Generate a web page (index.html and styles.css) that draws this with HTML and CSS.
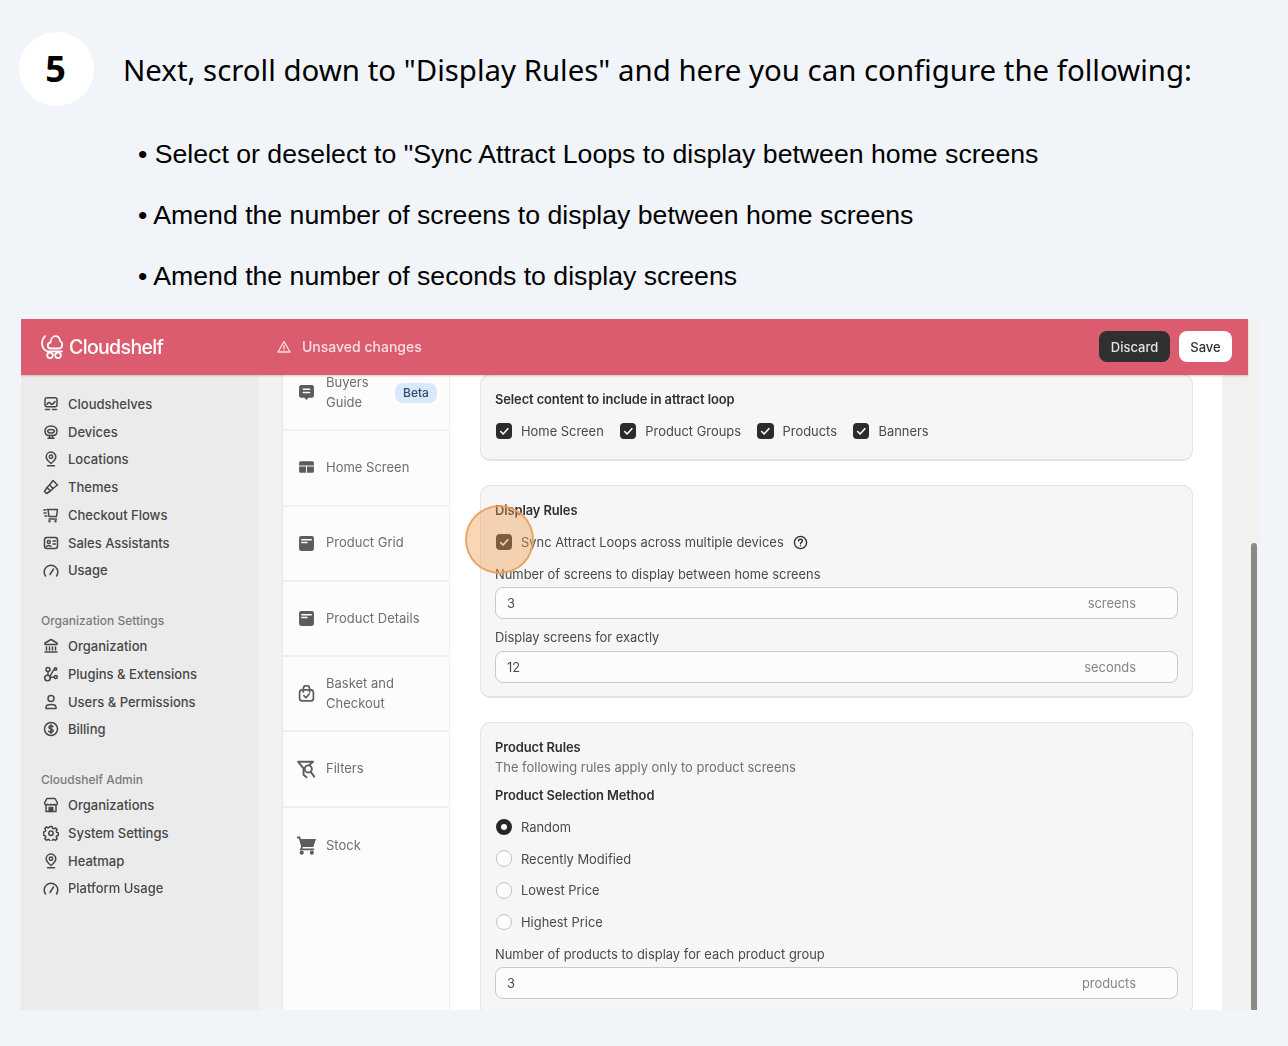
FILE: index.html
```html
<!DOCTYPE html>
<html lang="en">
<head>
    <meta charset="UTF-8">
    <title>Step 5 - Display Rules</title>
    <link rel="stylesheet" href="styles.css">
</head>
<body>
    <svg class="sprites" width="0" height="0">
        <symbol id="i-shelf" viewBox="0 0 16 16"><rect x="2" y="1.700" width="12" height="9" rx="2"/><path d="M4 8.500c1-2.500 2.500-2.500 3.500-1s2.500 1 4.500-2"/><path d="M2.500 13.500h4M9.500 13.500h4"/></symbol>
        <symbol id="i-device" viewBox="0 0 16 16"><path d="M2 7c0-3 2.500-5 6-5s6 2 6 5-2 4.500-4 4.500H6C4 11.500 2 10 2 7z"/><path d="M4.500 7c.5-2 6.500-2 7 0-.5 1.500-1.500 2-2.500 2H7C6 9 5 8.500 4.500 7zM5 14.300h6M6.500 11.500v2.800M9.500 11.500v2.800"/></symbol>
        <symbol id="i-pin" viewBox="0 0 16 16"><path d="M8 12.500C5.500 10.500 3.200 8.500 3.200 5.800a4.800 4.800 0 0 1 9.600 0c0 2.700-2.300 4.700-4.800 6.700z"/><circle cx="8" cy="5.800" r="1.700"/><path d="M4.500 14.800h7"/></symbol>
        <symbol id="i-brush" viewBox="0 0 16 16"><path d="M10 1.500l4.500 4.500-4.500 3.500L6.500 6z"/><path d="M6.500 6L4 8.500l3.500 3.500 2.500-2.500M4 8.500l-2.500 4 2 2 4-2.500"/></symbol>
        <symbol id="i-cart-fast" viewBox="0 0 16 16"><path d="M4 2.500h10.500l-1 7H6L5 2.500M6 12h7.500"/><path d="M.8 3h1.700M1 6h2M2 9h2"/><circle cx="6.500" cy="14.300" r=".5"/><circle cx="12.500" cy="14.300" r=".5"/></symbol>
        <symbol id="i-badge" viewBox="0 0 16 16"><rect x="1.500" y="2.500" width="13" height="11" rx="2.500"/><circle cx="5.800" cy="7" r="1.500"/><path d="M3.500 11.500c.5-1.500 4-1.500 4.500 0M10 6h2.500M10 9h2.500"/></symbol>
        <symbol id="i-gauge" viewBox="0 0 16 16"><path d="M2.500 14a6.800 6.800 0 1 1 11 0"/><path d="M7 12.500L10.500 7"/></symbol>
        <symbol id="i-bank" viewBox="0 0 16 16"><path d="M8 1.500l6 3.500v1.500H2V5zM3.500 9v3M6.500 9v3M9.500 9v3M12.500 9v3M2 14h12"/></symbol>
        <symbol id="i-apps" viewBox="0 0 16 16"><circle cx="5" cy="3.500" r="2"/><circle cx="12.500" cy="3" r="1.200"/><circle cx="4.500" cy="12" r="2.800"/><circle cx="12.800" cy="11" r="1.500"/><path d="M5 5.500v3.700M7.500 9.500l3-5.500M7 11.500l4.300-.5"/></symbol>
        <symbol id="i-user" viewBox="0 0 16 16"><circle cx="8" cy="4.500" r="3"/><path d="M3 14.500v-1.300c0-1.800 2-2.700 5-2.700s5 .9 5 2.700v1.300z"/></symbol>
        <symbol id="i-dollar" viewBox="0 0 16 16"><circle cx="8" cy="8" r="6.500"/><path d="M10 5.700C9.500 5 8.800 4.800 8 4.800c-1.200 0-2 .6-2 1.600 0 2.200 4.200 1 4.200 3.200 0 1-.9 1.600-2.200 1.600-.9 0-1.700-.3-2.200-1M8 3.800v8.400"/></symbol>
        <symbol id="i-store" viewBox="0 0 16 16"><path d="M4 1.500h8l2.500 4.500c0 1.800-2 2.300-3 1.200-.8 1-2.700 1-3.500 0-.8 1-2.700 1-3.500 0-1 1.100-3 .6-3-1.200zM3 8.500v6h10v-6"/><path d="M6.200 14.500v-4h3.600v4" fill="currentColor"/></symbol>
        <symbol id="i-gear" viewBox="0 0 16 16"><path d="M6.800 1.500h2.400l.4 1.800 1.300.6 1.600-1 1.700 1.700-1 1.600.6 1.300 1.700.4v2.400l-1.700.4-.6 1.300 1 1.600-1.700 1.700-1.600-1-1.300.6-.4 1.700H6.800l-.4-1.700-1.300-.6-1.600 1-1.700-1.700 1-1.600-.6-1.300-1.700-.4V6.900l1.700-.4.600-1.300-1-1.600 1.700-1.700 1.600 1 1.300-.6z"/><circle cx="8" cy="8.200" r="2.200"/></symbol>
        <symbol id="i-check" viewBox="0 0 16 16"><path d="M4.500 8.300l2.400 2.400 4.600-5.200"/></symbol>
    </svg>

    <div class="step">
        <div class="step-num">5</div>
        <div class="step-title">Next, scroll down to "Display Rules" and here you can configure the following:</div>
    </div>
    <div class="bullets">
        <p>• Select or deselect to "Sync Attract Loops to display between home screens</p>
        <p>• Amend the number of screens to display between home screens</p>
        <p>• Amend the number of seconds to display screens</p>
    </div>

    <div class="frame">
        <div class="app">
            <header class="topbar">
                <div class="logo">
                    <svg class="logo-mark" viewBox="0 0 22 24" fill="none" stroke="#fff" stroke-width="1.800" stroke-linecap="round" stroke-linejoin="round">
                        <path d="M4 1.200C1.800 3.500.8 6 1 8.800c.3 3.500 2.500 6.700 5.500 7.500H21"/>
                        <path d="M9.800 13.500c-1.800 0-3-1.300-3-3 0-1.600 1.200-2.800 2.700-3C9.800 3.800 12 1.200 14.500 1.200c2.600 0 4.300 2.200 4.500 4.800 1.300.4 2.200 1.700 2.200 3.400 0 2.300-1.500 4.100-3.700 4.100z"/>
                        <circle cx="9" cy="20.300" r="2.800"/>
                        <circle cx="17" cy="20.300" r="2.800"/>
                    </svg>
                    <span>Cloudshelf</span>
                </div>
                <div class="unsaved">
                    <svg class="warn" viewBox="0 0 16 16" fill="none" stroke="currentColor" stroke-width="1.300" stroke-linejoin="round" stroke-linecap="round"><path d="M8 2.500l6 10.500H2zM8 6.500v3M8 11.200v.1"/></svg>
                    <span>Unsaved changes</span>
                </div>
                <button class="btn btn-dark">Discard</button>
                <button class="btn btn-light">Save</button>
            </header>

            <div class="app-body">
                <nav class="sidebar">
                    <a class="nav-item"><svg class="icon"><use href="#i-shelf"/></svg>Cloudshelves</a>
                    <a class="nav-item"><svg class="icon"><use href="#i-device"/></svg>Devices</a>
                    <a class="nav-item"><svg class="icon"><use href="#i-pin"/></svg>Locations</a>
                    <a class="nav-item"><svg class="icon"><use href="#i-brush"/></svg>Themes</a>
                    <a class="nav-item"><svg class="icon"><use href="#i-cart-fast"/></svg>Checkout Flows</a>
                    <a class="nav-item"><svg class="icon"><use href="#i-badge"/></svg>Sales Assistants</a>
                    <a class="nav-item"><svg class="icon"><use href="#i-gauge"/></svg>Usage</a>

                    <div class="nav-label">Organization Settings</div>
                    <a class="nav-item"><svg class="icon"><use href="#i-bank"/></svg>Organization</a>
                    <a class="nav-item"><svg class="icon"><use href="#i-apps"/></svg>Plugins &amp; Extensions</a>
                    <a class="nav-item"><svg class="icon"><use href="#i-user"/></svg>Users &amp; Permissions</a>
                    <a class="nav-item"><svg class="icon"><use href="#i-dollar"/></svg>Billing</a>

                    <div class="nav-label">Cloudshelf Admin</div>
                    <a class="nav-item"><svg class="icon"><use href="#i-store"/></svg>Organizations</a>
                    <a class="nav-item"><svg class="icon"><use href="#i-gear"/></svg>System Settings</a>
                    <a class="nav-item"><svg class="icon"><use href="#i-pin"/></svg>Heatmap</a>
                    <a class="nav-item"><svg class="icon"><use href="#i-gauge"/></svg>Platform Usage</a>
                </nav>

                <div class="strip"></div>

                <div class="screens">
                    <div class="screen-row first">
                        <svg class="screen-icon" viewBox="0 0 16 16"><path d="M3 1h10a2 2 0 0 1 2 2v8a2 2 0 0 1-2 2h-3l-2 2-2-2H3a2 2 0 0 1-2-2V3a2 2 0 0 1 2-2z"/><path d="M5 5h6M5 8h6" class="cut"/></svg>
                        <span class="screen-name">Buyers<br>Guide</span>
                        <span class="beta">Beta</span>
                    </div>
                    <div class="screen-row">
                        <svg class="screen-icon" viewBox="0 0 16 16"><path d="M2.500 2h11A1.500 1.500 0 0 1 15 3.500V6H1V3.500A1.500 1.500 0 0 1 2.500 2zM1 7h6.500v6h-5A1.500 1.500 0 0 1 1 11.500zM8.500 7H15v4.500a1.500 1.500 0 0 1-1.500 1.500h-5z"/></svg>
                        <span class="screen-name">Home Screen</span>
                    </div>
                    <div class="screen-row">
                        <svg class="screen-icon" viewBox="0 0 16 16"><rect x="1" y="1" width="14" height="14" rx="2"/><path d="M3.500 4.500h9M3.500 7h5" class="cut"/></svg>
                        <span class="screen-name">Product Grid</span>
                    </div>
                    <div class="screen-row">
                        <svg class="screen-icon" viewBox="0 0 16 16"><rect x="1" y="1" width="14" height="14" rx="2"/><path d="M3.500 4.500h9M3.500 7h5" class="cut"/></svg>
                        <span class="screen-name">Product Details</span>
                    </div>
                    <div class="screen-row">
                        <svg class="screen-icon line" viewBox="0 0 16 16"><rect x="1.500" y="4.500" width="13" height="10.500" rx="2.500"/><path d="M5 6.500V3.500a3 3 0 0 1 6 0v3M5.500 10l2 2 3-3.500"/></svg>
                        <span class="screen-name">Basket and<br>Checkout</span>
                    </div>
                    <div class="screen-row">
                        <svg class="screen-icon line wide" viewBox="0 0 16 16"><path d="M1 1.500h12.500L10.500 4M1 1.500l4.500 5.500v5.500l2.500 2"/><circle cx="9.500" cy="7.500" r="3"/><path d="M11.500 10l3 4"/></svg>
                        <span class="screen-name">Filters</span>
                    </div>
                    <div class="screen-row last">
                        <svg class="screen-icon wide" viewBox="0 0 16 16"><path d="M0 .5h2.600l.7 2H16l-2.300 6.700H5l-.6 1.300h10v1.500H2l1.500-3L1.600 2H0z"/><circle cx="4" cy="14" r="1.700"/><circle cx="12.500" cy="14" r="1.700"/></svg>
                        <span class="screen-name">Stock</span>
                    </div>
                </div>

                <main class="content">
                    <section class="card">
                        <div class="card-title">Select content to include in attract loop</div>
                        <div class="check-row">
                            <label class="check"><span class="box"><svg viewBox="0 0 16 16"><use href="#i-check"/></svg></span>Home Screen</label>
                            <label class="check"><span class="box"><svg viewBox="0 0 16 16"><use href="#i-check"/></svg></span>Product Groups</label>
                            <label class="check"><span class="box"><svg viewBox="0 0 16 16"><use href="#i-check"/></svg></span>Products</label>
                            <label class="check"><span class="box"><svg viewBox="0 0 16 16"><use href="#i-check"/></svg></span>Banners</label>
                        </div>
                    </section>

                    <section class="card card-rules">
                        <div class="card-title">Display Rules</div>
                        <div class="check-row">
                            <label class="check"><span class="box"><svg viewBox="0 0 16 16"><use href="#i-check"/></svg></span>Sync Attract Loops across multiple devices</label>
                            <svg class="help" viewBox="0 0 16 16" fill="none" stroke="currentColor" stroke-width="1.500" stroke-linecap="round"><circle cx="8" cy="8" r="6.500"/><path d="M6 6.400C6 5.200 6.900 4.600 8 4.600s2 .7 2 1.700c0 1.400-2 1.500-2 3M8 11.400v.1"/></svg>
                        </div>
                        <div class="field">
                            <div class="field-label">Number of screens to display between home screens</div>
                            <div class="input"><span>3</span><span class="suffix">screens</span></div>
                        </div>
                        <div class="field">
                            <div class="field-label">Display screens for exactly</div>
                            <div class="input"><span>12</span><span class="suffix">seconds</span></div>
                        </div>
                    </section>

                    <section class="card">
                        <div class="card-title">Product Rules</div>
                        <div class="card-sub">The following rules apply only to product screens</div>
                        <div class="card-title method">Product Selection Method</div>
                        <div class="radios">
                            <label class="radio"><span class="dot on"></span>Random</label>
                            <label class="radio"><span class="dot"></span>Recently Modified</label>
                            <label class="radio"><span class="dot"></span>Lowest Price</label>
                            <label class="radio"><span class="dot"></span>Highest Price</label>
                        </div>
                        <div class="field after-radios">
                            <div class="field-label">Number of products to display for each product group</div>
                            <div class="input"><span>3</span><span class="suffix">products</span></div>
                        </div>
                    </section>
                </main>

                <div class="gutter"></div>
            </div>
        </div>
        <div class="scrollbar"><div class="thumb"></div></div>
        <div class="highlight"></div>
    </div>
</body>
</html>
```

FILE: styles.css
```css
* {
    box-sizing: border-box;
}
body {
    margin: 0;
    padding: 32px 0 0 19px;
    height: 1046px;
    overflow: hidden;
    background-color: #f1f5fa;
    color: #000;
    font-family: "Noto Sans", sans-serif;
}
.sprites {
    position: absolute;
}
.sprites symbol {
    fill: none;
    stroke: currentColor;
    stroke-width: 1.5;
    stroke-linecap: round;
    stroke-linejoin: round;
}

.step {
    display: flex;
    align-items: center;
    gap: 29px;
}
.step-num {
    width: 75px;
    height: 74px;
    padding: 0 2px 2px 0;
    border-radius: 50%;
    background-color: #fff;
    display: flex;
    align-items: center;
    justify-content: center;
    font-size: 36px;
    font-weight: 700;
}
.step-title {
    font-size: 29.42px;
    white-space: nowrap;
    padding-top: 2px;
}

.bullets {
    margin: 18px 0 12px 119px;
    font-family: "Liberation Sans", Arial, sans-serif;
    font-size: 26.67px;
}
.bullets p {
    margin: 0;
    height: 61px;
    line-height: 61px;
    white-space: nowrap;
}

.frame {
    position: relative;
    display: flex;
    width: 1238px;
    height: 691px;
    margin-left: 2px;
    overflow: hidden;
    font-family: Inter, "Noto Sans", sans-serif;
    font-size: 13px;
    color: #4a4a4a;
    filter: blur(0.45px);
}
.app {
    width: 1227px;
    display: flex;
    flex-direction: column;
}
.scrollbar {
    width: 11px;
    background-color: #f2f2f2;
    padding: 224px 2px 0 3px;
}
.thumb {
    height: 600px;
    border-radius: 3px;
    background-color: #8a8a8a;
}
.highlight {
    position: absolute;
    left: 444px;
    top: 186px;
    width: 69px;
    height: 69px;
    border-radius: 50%;
    background-color: rgba(240, 160, 80, 0.42);
    border: 2px solid rgba(232, 160, 95, 0.9);
}

.topbar {
    position: relative;
    z-index: 2;
    flex: none;
    height: 55.5px;
    display: flex;
    align-items: center;
    padding: 0 16px 0 20px;
    background-color: #da5c6e;
    box-shadow: 0 1px 2px rgba(0, 0, 0, 0.2);
}
.logo {
    width: 235px;
    display: flex;
    align-items: center;
    gap: 6px;
    color: #fff;
    font-size: 19.5px;
    font-weight: 500;
    letter-spacing: -0.65px;
}
.logo-mark {
    width: 22px;
    height: 24px;
}
.unsaved {
    flex: 1;
    display: flex;
    align-items: center;
    gap: 10px;
    color: #f7dfe3;
    font-size: 14px;
    font-weight: 500;
}
.warn {
    width: 16px;
    height: 16px;
}
.btn {
    height: 31px;
    border: none;
    border-radius: 8px;
    font-family: inherit;
    font-size: 13px;
    font-weight: 500;
}
.btn-dark {
    width: 71px;
    margin-right: 9px;
    background-color: #303030;
    color: #e3e3e3;
}
.btn-light {
    width: 53px;
    background-color: #fff;
    color: #303030;
}

.app-body {
    flex: 1;
    display: flex;
    min-height: 0;
}
.sidebar {
    flex: none;
    width: 237px;
    padding: 15.5px 0 0 20px;
    background-color: #ebebeb;
}
.nav-item {
    height: 27.75px;
    display: flex;
    align-items: center;
    gap: 9px;
    padding-left: 2px;
    font-weight: 500;
    color: #474747;
}
.icon {
    flex: none;
    width: 16px;
    height: 16px;
}
.nav-label {
    margin-top: 25px;
    height: 23px;
    line-height: 23px;
    font-size: 12px;
    font-weight: 500;
    color: #7a7a7a;
}

.strip {
    flex: none;
    width: 24px;
    background-color: #f2f2f2;
}
.screens {
    flex: none;
    width: 168px;
    background-color: #fcfcfc;
    border-left: 1px solid #e8e8e8;
    border-right: 1px solid #f0f0f0;
    overflow: hidden;
}
.screen-row {
    height: 75.3px;
    display: flex;
    align-items: center;
    padding: 0 12px 0 15px;
    border-bottom: 2px solid #f0f0f0;
    color: #6e6e6e;
    line-height: 19.5px;
}
.screen-row.first {
    margin-top: -18.5px;
}
.screen-row.last {
    border-bottom: none;
}
.screen-icon {
    flex: none;
    width: 17px;
    height: 17px;
    margin-right: 11px;
    fill: #5c5c5c;
}
.screen-icon.wide {
    width: 19px;
    height: 19px;
    margin-right: 10px;
    margin-left: -1px;
}
.screen-icon .cut {
    fill: none;
    stroke: #fcfcfc;
    stroke-width: 1.3;
    stroke-linecap: round;
}
.screen-icon.line {
    fill: none;
    stroke: #5c5c5c;
    stroke-width: 1.6;
    stroke-linecap: round;
    stroke-linejoin: round;
}
.screen-name {
    flex: 1;
}
.beta {
    width: 42px;
    height: 20px;
    line-height: 20px;
    border-radius: 8px;
    background-color: #d8e9fb;
    color: #2d4d70;
    font-size: 12px;
    font-weight: 500;
    text-align: center;
}

.content {
    flex: 1;
    min-width: 0;
    padding: 0 29px 0 30px;
    margin-top: -0.5px;
    background-color: #fff;
    overflow: hidden;
    font-size: 12.92px;
}
.gutter {
    flex: none;
    width: 26px;
    background-color: #f1f1f1;
}
.card {
    margin-bottom: 24px;
    padding: 14px;
    border: 1px solid #e3e3e3;
    border-bottom-width: 2px;
    border-radius: 10px;
    background-color: #f6f6f6;
}
.card-rules {
    padding-bottom: 13px;
}
.card-title {
    height: 20px;
    line-height: 20px;
    font-weight: 600;
    letter-spacing: -0.1px;
    color: #303030;
}
.card-title.method {
    margin-top: 8px;
}
.card-sub {
    height: 20px;
    line-height: 20px;
    color: #707070;
}
.check-row {
    height: 28px;
    margin-top: 8px;
    display: flex;
    align-items: center;
    gap: 15.5px;
}
.check,
.radio {
    display: flex;
    align-items: center;
    gap: 9px;
    margin-left: 0.5px;
}
.box {
    width: 16.5px;
    height: 16.5px;
    border-radius: 4px;
    background-color: #2c2c2c;
}
.box svg {
    display: block;
    width: 16.5px;
    height: 16.5px;
    color: #fff;
}
.help {
    width: 15px;
    height: 15px;
    margin-left: -6px;
    color: #303030;
}
.field {
    margin-top: 8px;
}
.field.after-radios {
    margin-top: 6px;
}
.field-label {
    height: 20px;
    line-height: 20px;
    margin-bottom: 3px;
}
.field + .field .field-label {
    margin-bottom: 4px;
}
.input {
    height: 32px;
    display: flex;
    align-items: center;
    justify-content: space-between;
    padding: 0 41px 0 11px;
    border: 1px solid #c9c9c9;
    border-radius: 8px;
    background-color: #fcfcfc;
}
.suffix {
    color: #858585;
}
.radios {
    margin-top: 6px;
}
.radio {
    height: 31.75px;
}
.dot {
    width: 16.5px;
    height: 16.5px;
    border-radius: 50%;
    border: 1px solid #c4c4c4;
    background-color: #fdfdfd;
}
.dot.on {
    border: 5px solid #262626;
}
```
